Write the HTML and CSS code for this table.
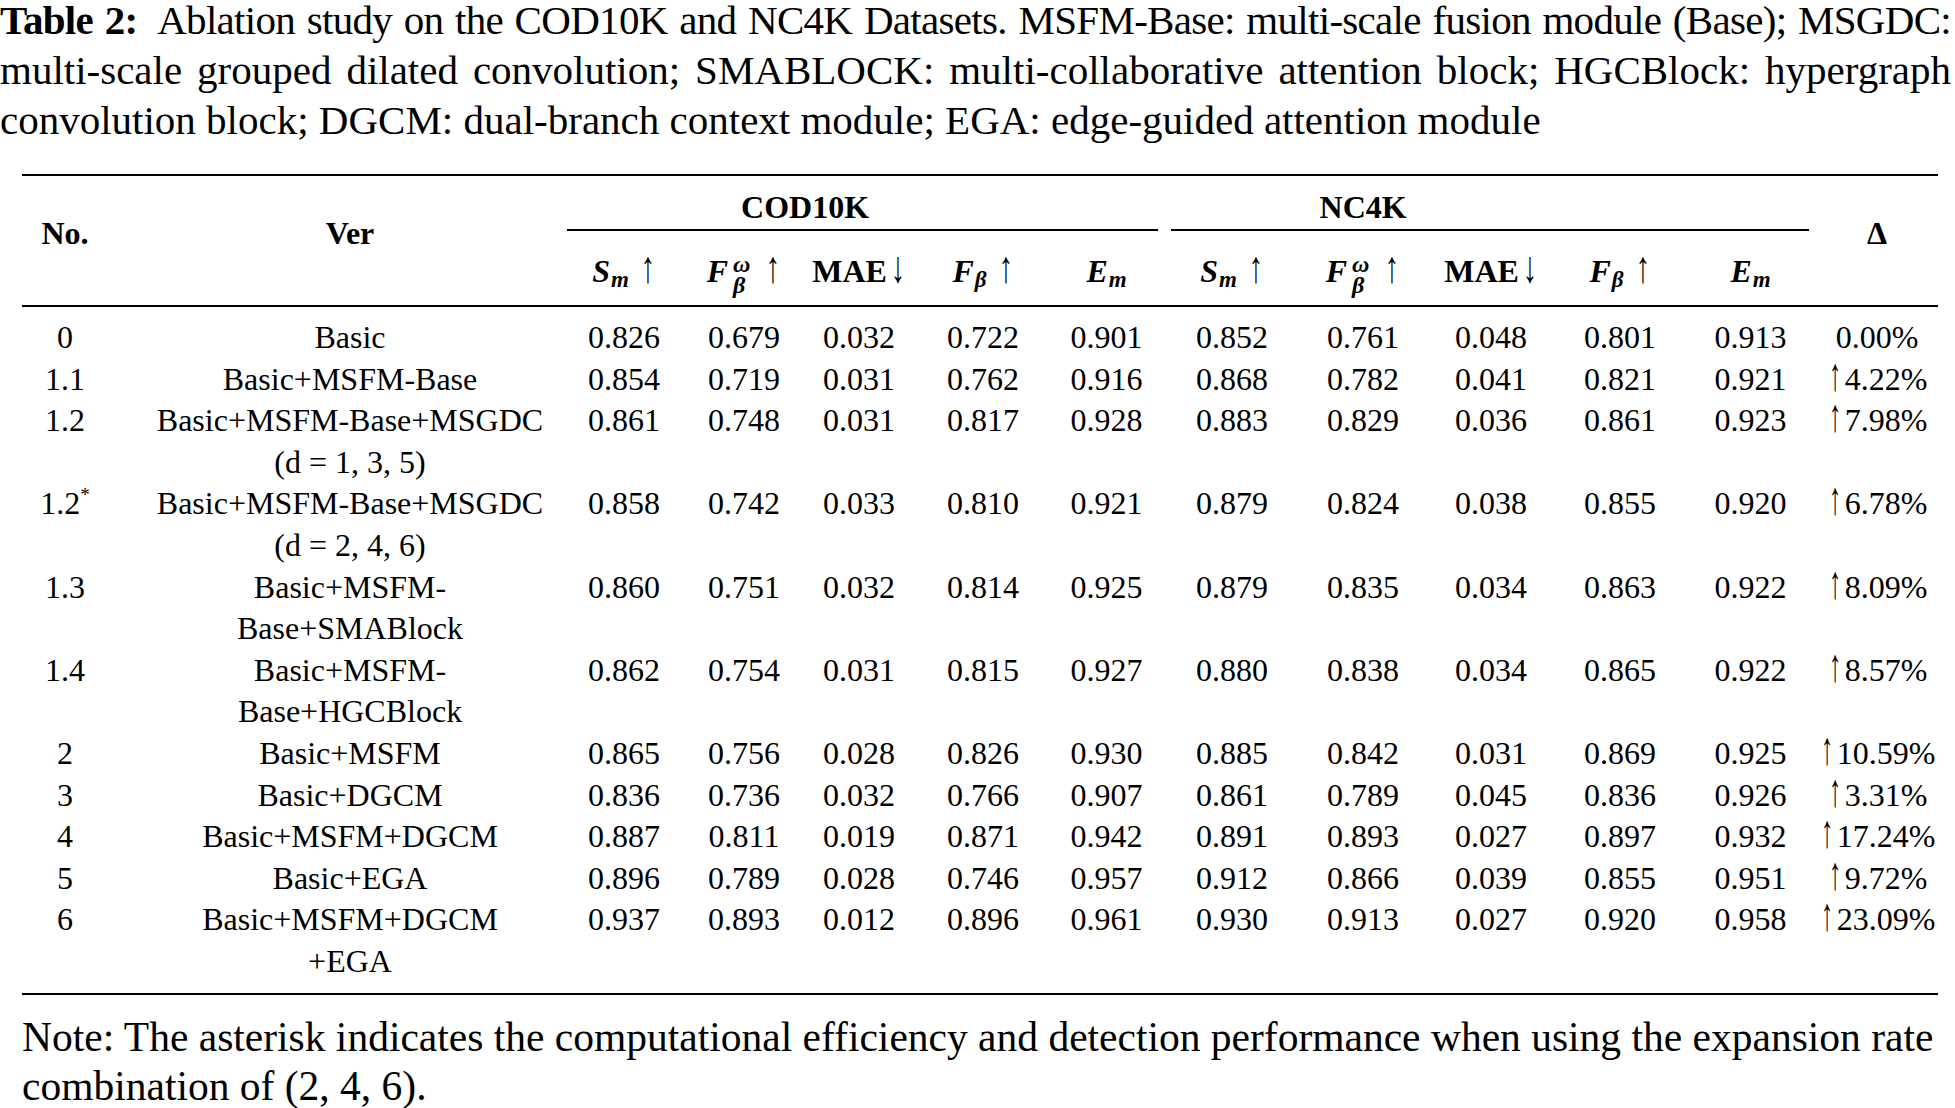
FILE: index.html
```html
<!DOCTYPE html>
<html lang="en">
<head>
<meta charset="utf-8">
<title>Table 2: Ablation study</title>
<link rel="stylesheet" href="styles.css">
</head>
<body>
<div class="caption">
  <div class="line just tight"><b>Table 2:</b>&ensp;Ablation study on the COD10K and NC4K Datasets. MSFM-Base: multi-scale fusion module (Base); MSGDC:</div>
  <div class="line just">multi-scale grouped dilated convolution; SMABLOCK: multi-collaborative attention block; HGCBlock: hypergraph</div>
  <div class="line">convolution block; DGCM: dual-branch context module; EGA: edge-guided attention module</div>
</div>

<table class="abl">
  <colgroup>
    <col class="w-no"><col class="w-ver">
    <col class="w-c1"><col class="w-c2"><col class="w-c3"><col class="w-c4"><col class="w-c5">
    <col class="w-n1"><col class="w-n2"><col class="w-n3"><col class="w-n4"><col class="w-n5">
    <col class="w-d">
  </colgroup>
  <thead>
    <tr class="h1">
      <th rowspan="2" class="span-cell">No.</th>
      <th rowspan="2" class="span-cell ver">Ver</th>
      <th colspan="5" class="grp"><div class="grp-in cod">COD10K</div></th>
      <th colspan="5" class="grp"><div class="grp-in nc">NC4K</div></th>
      <th rowspan="2" class="span-cell">Δ</th>
    </tr>
    <tr class="h2">
      <th><i>S</i><i class="sb">m</i> <span class="arr">↑</span></th>
      <th><i>F</i><span class="ss"><i class="ss-sup">ω</i><i class="ss-sub">β</i></span> <span class="arr">↑</span></th>
      <th>MAE<span class="arr">↓</span></th>
      <th><i>F</i><i class="sb">β</i> <span class="arr">↑</span></th>
      <th><i>E</i><i class="sb">m</i></th>
      <th><i>S</i><i class="sb">m</i> <span class="arr">↑</span></th>
      <th><i>F</i><span class="ss"><i class="ss-sup">ω</i><i class="ss-sub">β</i></span> <span class="arr">↑</span></th>
      <th>MAE<span class="arr">↓</span></th>
      <th><i>F</i><i class="sb">β</i> <span class="arr">↑</span></th>
      <th><i>E</i><i class="sb">m</i></th>
    </tr>
  </thead>
  <tbody>
    <tr class="first"><td>0</td><td class="ver">Basic</td><td>0.826</td><td>0.679</td><td>0.032</td><td>0.722</td><td>0.901</td><td>0.852</td><td>0.761</td><td>0.048</td><td>0.801</td><td>0.913</td><td>0.00%</td></tr>
    <tr><td>1.1</td><td class="ver">Basic+MSFM-Base</td><td>0.854</td><td>0.719</td><td>0.031</td><td>0.762</td><td>0.916</td><td>0.868</td><td>0.782</td><td>0.041</td><td>0.821</td><td>0.921</td><td><span class="up">↑</span>4.22%</td></tr>
    <tr><td>1.2</td><td class="ver">Basic+MSFM-Base+MSGDC<br>(d = 1, 3, 5)</td><td>0.861</td><td>0.748</td><td>0.031</td><td>0.817</td><td>0.928</td><td>0.883</td><td>0.829</td><td>0.036</td><td>0.861</td><td>0.923</td><td><span class="up">↑</span>7.98%</td></tr>
    <tr><td>1.2<sup class="ast">*</sup></td><td class="ver">Basic+MSFM-Base+MSGDC<br>(d = 2, 4, 6)</td><td>0.858</td><td>0.742</td><td>0.033</td><td>0.810</td><td>0.921</td><td>0.879</td><td>0.824</td><td>0.038</td><td>0.855</td><td>0.920</td><td><span class="up">↑</span>6.78%</td></tr>
    <tr><td>1.3</td><td class="ver">Basic+MSFM-<br>Base+SMABlock</td><td>0.860</td><td>0.751</td><td>0.032</td><td>0.814</td><td>0.925</td><td>0.879</td><td>0.835</td><td>0.034</td><td>0.863</td><td>0.922</td><td><span class="up">↑</span>8.09%</td></tr>
    <tr><td>1.4</td><td class="ver">Basic+MSFM-<br>Base+HGCBlock</td><td>0.862</td><td>0.754</td><td>0.031</td><td>0.815</td><td>0.927</td><td>0.880</td><td>0.838</td><td>0.034</td><td>0.865</td><td>0.922</td><td><span class="up">↑</span>8.57%</td></tr>
    <tr><td>2</td><td class="ver">Basic+MSFM</td><td>0.865</td><td>0.756</td><td>0.028</td><td>0.826</td><td>0.930</td><td>0.885</td><td>0.842</td><td>0.031</td><td>0.869</td><td>0.925</td><td><span class="up">↑</span>10.59%</td></tr>
    <tr><td>3</td><td class="ver">Basic+DGCM</td><td>0.836</td><td>0.736</td><td>0.032</td><td>0.766</td><td>0.907</td><td>0.861</td><td>0.789</td><td>0.045</td><td>0.836</td><td>0.926</td><td><span class="up">↑</span>3.31%</td></tr>
    <tr><td>4</td><td class="ver">Basic+MSFM+DGCM</td><td>0.887</td><td>0.811</td><td>0.019</td><td>0.871</td><td>0.942</td><td>0.891</td><td>0.893</td><td>0.027</td><td>0.897</td><td>0.932</td><td><span class="up">↑</span>17.24%</td></tr>
    <tr><td>5</td><td class="ver">Basic+EGA</td><td>0.896</td><td>0.789</td><td>0.028</td><td>0.746</td><td>0.957</td><td>0.912</td><td>0.866</td><td>0.039</td><td>0.855</td><td>0.951</td><td><span class="up">↑</span>9.72%</td></tr>
    <tr class="last"><td>6</td><td class="ver">Basic+MSFM+DGCM<br>+EGA</td><td>0.937</td><td>0.893</td><td>0.012</td><td>0.896</td><td>0.961</td><td>0.930</td><td>0.913</td><td>0.027</td><td>0.920</td><td>0.958</td><td><span class="up">↑</span>23.09%</td></tr>
  </tbody>
</table>

<div class="note">
  <div class="line just">Note: The asterisk indicates the computational efficiency and detection performance when using the expansion rate</div>
  <div class="line">combination of (2, 4, 6).</div>
</div>
</body>
</html>
```

FILE: styles.css
```css
html, body {
  margin: 0;
  padding: 0;
  background: #ffffff;
  color: #000000;
  font-family: "Liberation Serif", "Times New Roman", serif;
}

.caption {
  font-size: 41px;
  line-height: 50px;
  margin-top: -5px;
  padding-right: 4px;
}

.line {
  white-space: nowrap;
}

.line.just {
  text-align: justify;
  text-align-last: justify;
}

.line.tight {
  letter-spacing: -0.7px;
}

.abl {
  margin: 29px 0 0 22px;
  width: 1916px;
  table-layout: fixed;
  border-collapse: collapse;
  font-size: 32px;
  line-height: 41.6px;
  border-top: 2px solid #000;
  border-bottom: 2px solid #000;
}

.w-no { width: 86px; }
.w-ver { width: 452px; }
.w-c1 { width: 128px; }
.w-c2 { width: 112px; }
.w-c3 { width: 118px; }
.w-c4 { width: 130px; }
.w-c5 { width: 117px; }
.w-n1 { width: 134px; }
.w-n2 { width: 128px; }
.w-n3 { width: 128px; }
.w-n4 { width: 130px; }
.w-n5 { width: 131px; }
.w-d { width: 122px; }

.abl th,
.abl td {
  padding: 0;
  text-align: center;
  white-space: nowrap;
}

.abl th {
  font-weight: bold;
  line-height: 42px;
}

.abl .ver {
  padding-left: 32px;
}

.span-cell {
  vertical-align: middle;
  padding-bottom: 16px !important;
  border-bottom: 2px solid #000;
}

.grp {
  vertical-align: top;
}

.grp-in {
  padding-top: 10px;
  padding-bottom: 1px;
  border-bottom: 2px solid #000;
}

.grp-in.cod {
  margin: 0 7px 0 7px;
  padding-right: 115px;
}

.grp-in.nc {
  margin: 0 7px 0 6px;
  padding-right: 254px;
}

.h2 th {
  padding-top: 19px;
  padding-bottom: 9px;
  border-bottom: 2px solid #000;
  vertical-align: top;
}

.sb {
  font-size: 0.72em;
  position: relative;
  top: 0.22em;
  margin-left: 1px;
}

.ss {
  display: inline-block;
  vertical-align: -11px;
  font-size: 24px;
  line-height: 21px;
  text-align: left;
  margin-left: 5px;
  margin-right: 4px;
}

.ss-sup,
.ss-sub {
  display: block;
}

.arr {
  display: inline-block;
  font-weight: bold;
  line-height: 24px;
  transform: scale(0.9, 1.4);
  transform-origin: 50% 95%;
  margin-left: 3px;
}

.abl td {
  vertical-align: top;
}

.abl tr.first td {
  padding-top: 10px;
}

.abl tr.last td {
  padding-bottom: 10px;
}

.ast {
  font-size: 0.6em;
  line-height: 0;
  vertical-align: 0.7em;
}

.up {
  display: inline-block;
  line-height: 24px;
  margin-right: 2px;
  transform: scale(0.75, 1.45);
  transform-origin: 50% 95%;
}

.note {
  margin: 18px 25px 0 22px;
  font-size: 41.5px;
  line-height: 49px;
}
```
